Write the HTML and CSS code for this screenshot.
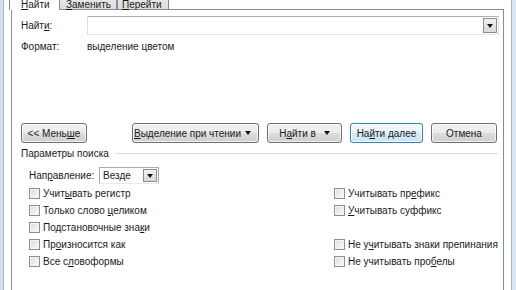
FILE: index.html
```html
<!DOCTYPE html>
<html lang="ru">
<head>
<meta charset="utf-8">
<link rel="stylesheet" href="styles.css">
</head>
<body>
<div class="window">
  <div class="frame-l"></div>
  <div class="client">
    <div class="tabs">
      <div class="tab active"><span><u>Н</u>айти</span></div>
      <div class="tab t2"><span><u>З</u>аменить</span></div>
      <div class="tab t3"><span><u>П</u>ерейти</span></div>
    </div>
    <div class="panel">
      <div class="find-row">
        <span class="lbl">Найт<u>и</u>:</span>
        <div class="combo"><span class="combo-btn"><span class="arrow"></span></span></div>
      </div>
      <div class="fmt-row">
        <span class="lbl">Формат:</span>
        <span>выделение цветом</span>
      </div>
      <div class="buttons">
        <div class="btn less"><span>&lt;&lt; Мень<u>ш</u>е</span></div>
        <div class="btn read"><span><u>В</u>ыделение при чтении</span><span class="arrow"></span></div>
        <div class="btn findin"><span>Н<u>а</u>йти в</span><span class="arrow"></span></div>
        <div class="btn next"><span>На<u>й</u>ти далее</span></div>
        <div class="btn cancel"><span>Отмена</span></div>
      </div>
      <div class="section"><span>Параметры поиска</span><span class="line"></span></div>
      <div class="options">
        <div class="dir"><span class="dir-lbl">Нап<u>р</u>авление:</span><div class="select"><span class="sel-text">Везде</span><span class="sel-btn"><span class="arrow"></span></span></div></div>
        <div></div>
        <div class="cb"><span class="box"></span><span>Учит<u>ы</u>вать регистр</span></div>
        <div class="cb"><span class="box"></span><span>Учитывать пр<u>е</u>фикс</span></div>
        <div class="cb"><span class="box"></span><span>Только слово <u>ц</u>еликом</span></div>
        <div class="cb"><span class="box"></span><span><u>У</u>читывать суффикс</span></div>
        <div class="cb"><span class="box"></span><span>Подстановочные зна<u>к</u>и</span></div>
        <div></div>
        <div class="cb"><span class="box"></span><span>Пр<u>о</u>износится как</span></div>
        <div class="cb"><span class="box"></span><span>Не у<u>ч</u>итывать знаки препинания</span></div>
        <div class="cb"><span class="box"></span><span>Все с<u>л</u>овоформы</span></div>
        <div class="cb"><span class="box"></span><span>Не учитывать про<u>б</u>елы</span></div>
      </div>
    </div>
  </div>
  <div class="frame-r"></div>
</div>
</body>
</html>
```
FILE: styles.css
```css
* { box-sizing: border-box; }
html, body { margin: 0; padding: 0; }
body {
  width: 516px;
  height: 290px;
  overflow: hidden;
  background: #d6e2f0;
  font-family: "Liberation Sans", Arial, sans-serif;
  font-size: 10px;
  color: #1a1a1a;
}
u { text-decoration-thickness: 1px; text-underline-offset: 1px; }
.window { display: flex; height: 290px; }
.frame-l { width: 3px; background: #d3dfee; }
.frame-r { width: 4px; background: #dbe6f4; }
.client {
  width: 509px;
  background: #fff;
  border-left: 1px solid #a6b4c6;
  border-right: 1px solid #a6b4c6;
  padding: 0 7px 0 7px;
  overflow: hidden;
}
.tabs {
  display: flex;
  margin-left: -2px;
  height: 10px;
  position: relative;
  z-index: 1;
}
.tab {
  height: 9px;
  line-height: 10px;
  border: 1px solid #898c95;
  border-bottom: none;
  border-top: none;
  background: linear-gradient(#e6e6e6, #dcdcdc);
  padding-left: 4px;
}
.tab.active {
  height: 10px;
  background: #fff;
  width: 51px;
  padding-left: 11px;
}
.tab.t2 { width: 57px; padding-left: 6px; border-left: none; }
.tab.t3 { width: 52px; padding-left: 4px; }
.panel {
  margin-top: -1px;
  border: 1px solid #898c95;
  border-bottom: none;
  height: 300px;
  padding: 0 4px 0 9px;
  background: #fff;
}
.find-row {
  display: flex;
  align-items: center;
  height: 19px;
  margin-top: 6px;
}
.lbl { width: 66px; flex: none; }
.combo {
  width: 412px;
  height: 19px;
  border: 1px solid #abadb3;
  border-left-color: #dbdfe6;
  border-right-color: #dbdfe6;
  border-bottom-color: #e3e9ef;
  display: flex;
  justify-content: flex-end;
  align-items: stretch;
  padding: 1px;
}
.combo-btn {
  width: 14px;
  border: 1px solid #8c8c8c;
  background: linear-gradient(#f2f2f2, #d8d8d8);
  display: flex;
  align-items: center;
  justify-content: center;
}
.arrow {
  display: inline-block;
  width: 0; height: 0;
  border-left: 3.5px solid transparent;
  border-right: 3.5px solid transparent;
  border-top: 4px solid #111;
}
.fmt-row {
  display: flex;
  align-items: center;
  height: 16px;
  margin-top: 3px;
}
.buttons {
  display: flex;
  gap: 8px;
  margin-top: 69px;
  height: 20px;
}
.btn {
  height: 20px;
  border: 1px solid #707070;
  border-radius: 3px;
  background: linear-gradient(#f2f2f2 0%, #ebebeb 50%, #dddddd 51%, #cfcfcf 100%);
  box-shadow: inset 0 0 0 1px rgba(255,255,255,0.7);
  display: flex;
  align-items: center;
  justify-content: center;
  white-space: nowrap;
}
.less { width: 66px; }
.read { width: 127px; margin-left: 37px; justify-content: space-between; padding: 0 7px 0 1px; }
.findin { width: 75px; gap: 8px; }
.next {
  width: 73px;
  border-color: #3c7fb1;
  background: linear-gradient(#f3f9fd 0%, #e6f2fa 50%, #d6e9f6 51%, #cfe4f3 100%);
  box-shadow: inset 0 0 0 1px rgba(255,255,255,0.8), 0 0 1px #8cc4ec;
}
.cancel { width: 66px; }
.section {
  display: flex;
  align-items: center;
  height: 14px;
  margin-top: 3px;
  width: 477px;
}
.section .line { flex: 1; height: 1px; background: #d5dfe5; margin-left: 6px; }
.options {
  display: grid;
  grid-template-columns: 305px 1fr;
  grid-auto-rows: 17px;
  padding-left: 8px;
  margin-top: 7px;
}
.dir { display: flex; align-items: center; }
.dir-lbl { width: 70px; flex: none; }
.select {
  width: 60px;
  height: 17px;
  border: 1px solid #abadb3;
  border-bottom-color: #e3e9ef;
  display: flex;
  align-items: center;
  justify-content: space-between;
  padding: 1px 1px 1px 3px;
}
.sel-btn {
  width: 14px;
  height: 13px;
  border: 1px solid #8c8c8c;
  background: linear-gradient(#f2f2f2, #d8d8d8);
  display: flex;
  align-items: center;
  justify-content: center;
}
.cb { display: flex; align-items: center; white-space: nowrap; position: relative; top: 1px; }
.box {
  width: 11px; height: 11px;
  border: 1px solid #8f8f8f;
  background: linear-gradient(135deg, #dcdcdc, #fbfbfb);
  box-shadow: inset 0 0 0 1px #f4f4f4;
  margin-right: 3px;
  flex: none;
}
```
